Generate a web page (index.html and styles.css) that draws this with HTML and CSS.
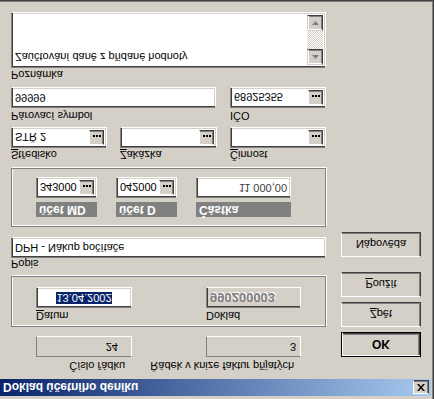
FILE: index.html
```html
<!DOCTYPE html>
<html lang="cs">
<head>
    <meta charset="UTF-8">
    <title>Doklad účetního deníku</title>
    <link rel="stylesheet" href="styles.css">
</head>
<body>
    <div class="window">
        <div class="titlebar">
            <span class="title">Doklad účetního deníku</span>
            <span class="close">
                <svg width="8" height="7" viewBox="0 0 8 7"><path d="M0 0h2l2 2.5L6 0h2L5 3.5 8 7H6L4 4.5 2 7H0l3-3.5z" fill="#000"/></svg>
            </span>
        </div>

        <div class="content">
            <div class="main">
                <!-- line info -->
                <div class="row row-info">
                    <div class="cell cell-num">
                        <span class="lbl lbl-right">Číslo řádku</span>
                        <div class="ro num-first">24</div>
                    </div>
                    <div class="cell cell-wide">
                        <span class="lbl lbl-right">Řádek v knize faktur přijatých</span>
                        <div class="ro num-second">3</div>
                    </div>
                </div>

                <!-- document -->
                <div class="group group-doc">
                    <div class="cell cell-num">
                        <span class="lbl"><u>D</u>atum</span>
                        <div class="field field-center"><span class="sel">13.04.2002</span></div>
                    </div>
                    <div class="cell cell-wide">
                        <span class="lbl">Doklad</span>
                        <div class="field field-disabled">990200003</div>
                    </div>
                </div>

                <span class="lbl lbl-popis">Popis</span>
                <div class="field">DPH - Nákup počítače</div>

                <!-- accounts -->
                <div class="group group-acc">
                    <div class="cell cell-acc">
                        <span class="tag">účet MD</span>
                        <div class="lookup"><span class="val">343000</span><span class="dots"><i></i><i></i><i></i></span></div>
                    </div>
                    <div class="cell cell-acc">
                        <span class="tag">účet D</span>
                        <div class="lookup"><span class="val">042000</span><span class="dots"><i></i><i></i><i></i></span></div>
                    </div>
                    <div class="cell cell-wide">
                        <span class="tag">Částka</span>
                        <div class="field field-amount">11 000,00</div>
                    </div>
                </div>

                <div class="row row-centres">
                    <div class="cell cell-centre">
                        <span class="lbl"><u>S</u>tředisko</span>
                        <div class="lookup"><span class="val">STŘ 2</span><span class="dots"><i></i><i></i><i></i></span></div>
                    </div>
                    <div class="cell cell-order">
                        <span class="lbl"><u>Z</u>akázka</span>
                        <div class="lookup"><span class="val"></span><span class="dots"><i></i><i></i><i></i></span></div>
                    </div>
                    <div class="cell cell-centre">
                        <span class="lbl"><u>Č</u>innost</span>
                        <div class="lookup"><span class="val"></span><span class="dots"><i></i><i></i><i></i></span></div>
                    </div>
                </div>

                <div class="row row-ids">
                    <div class="cell cell-symbol">
                        <span class="lbl">Párovací symbol</span>
                        <div class="field">99999</div>
                    </div>
                    <div class="cell cell-centre">
                        <span class="lbl">IČO</span>
                        <div class="lookup"><span class="val">68925355</span><span class="dots"><i></i><i></i><i></i></span></div>
                    </div>
                </div>

                <span class="lbl lbl-note">Poznámka</span>
                <div class="memo">
                    <div class="memo-text">Zaúčtování daně z přidané hodnoty</div>
                    <div class="scrollbar">
                        <span class="arrow"><svg width="7" height="4" viewBox="0 0 7 4"><path d="M3.5 0L7 4H0z" fill="#808080"/></svg></span>
                        <span class="track"></span>
                        <span class="arrow"><svg width="7" height="4" viewBox="0 0 7 4"><path d="M0 0h7L3.5 4z" fill="#808080"/></svg></span>
                    </div>
                </div>
            </div>

            <div class="side">
                <button class="btn btn-default">OK</button>
                <button class="btn"><u>Z</u>pět</button>
                <button class="btn"><u>P</u>oužít</button>
                <button class="btn btn-help">Nápověda</button>
            </div>
        </div>
    </div>
</body>
</html>
```

FILE: styles.css
```css
* {
    margin: 0;
    padding: 0;
    box-sizing: border-box;
}

body {
    font-family: "Liberation Sans", Arial, sans-serif;
    font-size: 11px;
    color: #000;
    background-color: #d4d0c8;
}

u {
    text-decoration: underline;
    text-underline-offset: 1px;
}

/* the whole screenshot is mirrored top to bottom */
.window {
    width: 434px;
    height: 399px;
    padding-top: 3px;
    background-color: #d4d0c8;
    border-right: 1px solid #404040;
    border-bottom: 1px solid #404040;
    box-shadow: inset -1px -1px #808080;
    transform: scaleY(-1);
}

.titlebar {
    height: 17px;
    margin-right: 2px;
    padding: 0 2px 0 3px;
    display: flex;
    align-items: center;
    justify-content: space-between;
    background: linear-gradient(to right, #0a246a, #a6caf0);
}

.title {
    color: white;
    font-weight: bold;
    font-size: 12px;
}

.close {
    width: 16px;
    height: 14px;
    display: flex;
    align-items: center;
    justify-content: center;
    background-color: #d4d0c8;
    border: 1px solid;
    border-color: #fff #404040 #404040 #fff;
    box-shadow: inset -1px -1px #808080;
}

.content {
    display: flex;
}

.main {
    width: 315px;
    margin-left: 11px;
}

.side {
    width: 80px;
    margin-left: 15px;
    display: flex;
    flex-direction: column;
}

/* labels and rows */
.lbl {
    display: block;
    height: 12px;
    line-height: 12px;
    white-space: nowrap;
}

.lbl-right {
    align-self: flex-end;
    padding-right: 7px;
}

.row {
    display: flex;
}

.cell {
    display: flex;
    flex-direction: column;
}

.row-info {
    margin-top: 7px;
    padding-left: 25px;
    gap: 74px;
}

.row-info .lbl {
    margin-bottom: 3px;
}

.cell-num {
    width: 96px;
}

.cell-wide {
    width: 95px;
}

.cell-acc {
    width: 61px;
}

.cell-centre {
    width: 96px;
}

.cell-order {
    width: 97px;
}

.cell-symbol {
    width: 205px;
}

.row-centres {
    margin-top: 7px;
    gap: 13px;
}

.row-centres .lbl {
    margin-bottom: 1px;
}

.row-ids {
    margin-top: 5px;
    gap: 14px;
}

.row-ids .lbl {
    margin-bottom: 2px;
}

.lbl-popis {
    margin-top: 6px;
}

.lbl-note {
    margin-top: 6px;
    margin-bottom: 1px;
}

/* group boxes */
.group {
    display: flex;
    border: 1px solid #808080;
    box-shadow: inset 1px 1px #fff, 1px 1px #fff;
}

.group-doc {
    margin-top: 9px;
    height: 51px;
    padding: 4px 0 0 24px;
    gap: 74px;
}

.group-doc .lbl {
    margin-bottom: 2px;
}

.group-acc {
    margin-top: 10px;
    height: 59px;
    padding: 9px 0 0 24px;
}

.group-acc .cell + .cell {
    margin-left: 19px;
}

.group-acc .cell-wide {
    margin-left: 29px;
}

.tag {
    display: block;
    height: 15px;
    margin-bottom: 4px;
    padding-left: 3px;
    line-height: 15px;
    font-size: 12px;
    font-weight: bold;
    color: white;
    background-color: #808080;
    white-space: nowrap;
}

/* edit fields */
.field,
.lookup,
.memo {
    background-color: white;
    border: 1px solid;
    border-color: #808080 #fff #fff #808080;
    box-shadow: inset 1px 1px #404040, inset -1px -1px #d4d0c8;
}

.field {
    height: 21px;
    padding: 0 3px;
    line-height: 19px;
    white-space: nowrap;
    overflow: hidden;
}

.field-center {
    text-align: center;
}

.sel {
    color: white;
    background-color: #0a246a;
}

.field-disabled {
    background-color: #d4d0c8;
    color: #808080;
    font-weight: bold;
    font-size: 13px;
    text-shadow: 1px 1px #fff;
}

.field-amount {
    text-align: right;
    color: #404040;
}

.ro {
    height: 21px;
    line-height: 19px;
    text-align: right;
    border: 1px solid;
    border-color: #808080 #fff #fff #808080;
}

.num-first {
    padding-right: 13px;
}

.num-second {
    padding-right: 4px;
}

.lookup {
    height: 21px;
    display: flex;
    padding: 2px;
}

.val {
    flex: 1;
    padding-left: 1px;
    line-height: 17px;
    white-space: nowrap;
}

.dots {
    width: 15px;
    display: flex;
    align-items: center;
    justify-content: center;
    gap: 1px;
    padding-top: 2px;
    background-color: #d4d0c8;
    border: 1px solid;
    border-color: #fff #404040 #404040 #fff;
    box-shadow: inset -1px -1px #808080;
}

.dots i {
    width: 2px;
    height: 2px;
    background-color: #000;
}

/* memo */
.memo {
    height: 56px;
    display: flex;
    padding: 2px;
}

.memo-text {
    flex: 1;
    padding: 2px 1px;
    line-height: 12px;
}

.scrollbar {
    width: 16px;
    display: flex;
    flex-direction: column;
}

.arrow {
    height: 16px;
    display: flex;
    align-items: center;
    justify-content: center;
    background-color: #d4d0c8;
    border: 1px solid;
    border-color: #d4d0c8 #404040 #404040 #d4d0c8;
    box-shadow: inset 1px 1px #fff, inset -1px -1px #808080;
}

.track {
    flex: 1;
    background: repeating-conic-gradient(#fff 0 25%, #d4d0c8 0 50%) 0 0 / 2px 2px;
}

/* buttons */
.btn {
    height: 25px;
    font-family: inherit;
    font-size: 11px;
    color: #000;
    background-color: #d4d0c8;
    border: 1px solid;
    border-color: #fff #404040 #404040 #fff;
    box-shadow: inset -1px -1px #808080, inset 1px 1px #d4d0c8;
}

.btn-default {
    margin-top: 22px;
    font-weight: bold;
    font-size: 12px;
    border-color: #000;
    box-shadow: inset 1px 1px #fff, inset -1px -1px #404040, inset -2px -2px #808080;
}

.btn + .btn {
    margin-top: 5px;
}

.btn + .btn-help {
    margin-top: 15px;
}
```
